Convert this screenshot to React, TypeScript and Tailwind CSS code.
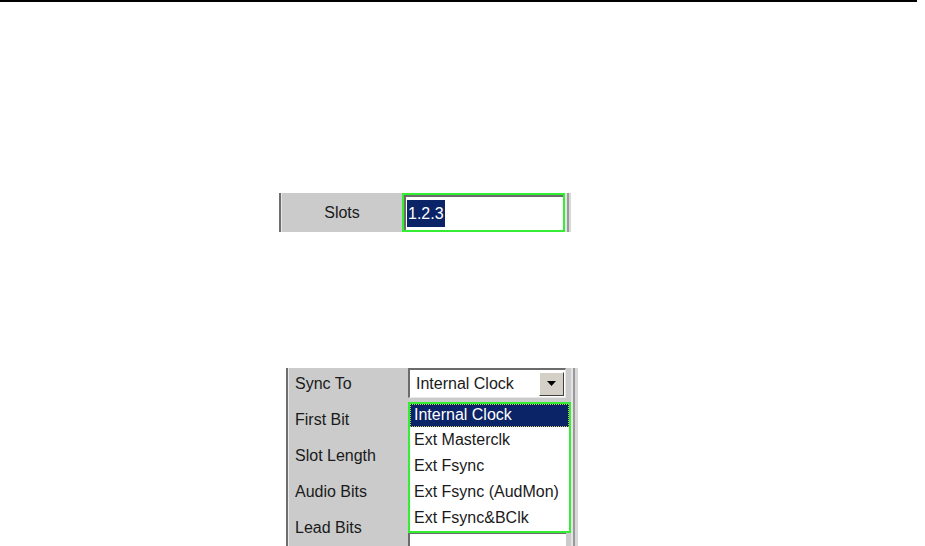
import React from 'react';

const font = { fontFamily: '"Liberation Sans", Arial, sans-serif' };

const labels = ['Sync To', 'First Bit', 'Slot Length', 'Audio Bits', 'Lead Bits'];
const options = ['Internal Clock', 'Ext Masterclk', 'Ext Fsync', 'Ext Fsync (AudMon)', 'Ext Fsync&BClk'];

const App: React.FC = () => {
  return (
    <div className="w-[925px] h-[546px] bg-white overflow-hidden relative" style={font}>
      {/* top rule */}
      <div className="w-[917px] h-[2px] bg-black" />

      {/* Slots field */}
      <div className="ml-[279px] mt-[191px] w-[292px] h-[39px] flex bg-[#cbcbcb]">
        <div className="w-[2px] bg-[#6e6e6e]" />
        <div className="w-[1px] bg-[#e8e8e8]" />
        <div className="w-[120px] flex items-center justify-center text-[16px] text-[#1a1a1a]">Slots</div>
        <div className="w-[163px] border-2 border-[#33ee33] bg-white">
          <div className="h-full border-t-2 border-l-2 border-[#6b6b6b] flex items-center pl-[1px]">
            <span className="bg-[#0b2468] text-white text-[16px] leading-[27px] px-[1px]">1.2.3</span>
          </div>
        </div>
        <div className="w-[2px] bg-[#e4e4e4]" />
        <div className="w-[2px] bg-[#9a9a9a]" />
        <div className="flex-1 bg-[#d8d8d8]" />
      </div>

      {/* Sync panel */}
      <div className="ml-[286px] mt-[136px] w-[292px] h-[178px] flex bg-[#cbcbcb] relative">
        <div className="w-[2px] bg-[#6e6e6e]" />
        <div className="w-[1px] bg-[#e8e8e8]" />
        <div className="w-[119px] flex flex-col pl-[6px] pt-[4px] gap-[13px] text-[16px] text-[#1a1a1a]">
          {labels.map((l) => (
            <div key={l} className="h-[23px] leading-[23px]">{l}</div>
          ))}
        </div>
        <div className="w-[158px] flex flex-col">
          <div className="h-[30px] bg-white border-t-2 border-l-2 border-[#6b6b6b] border-r border-b border-r-[#e8e8e8] border-b-[#e8e8e8] flex items-center">
            <span className="flex-1 pl-[6px] text-[16px] text-[#1a1a1a]">Internal Clock</span>
            <div className="w-[25px] h-[24px] mr-[1px] bg-[#d4d0c8] border border-t-white border-l-white border-r-[#404040] border-b-[#404040] flex items-center justify-center">
              <svg width="9" height="5" viewBox="0 0 9 5"><path d="M0 0h9L4.5 5z" fill="#000" /></svg>
            </div>
          </div>
          <div className="flex-1" />
          <div className="h-[14px] bg-white border-t-2 border-l-2 border-[#6b6b6b]" />
        </div>
        <div className="w-[5px] bg-[#cbcbcb]" />
        <div className="w-[2px] bg-[#e4e4e4]" />
        <div className="w-[2px] bg-[#9a9a9a]" />
        <div className="flex-1 bg-[#d8d8d8]" />

        {/* open dropdown list */}
        <div className="absolute left-[122px] top-[34px] w-[163px] h-[131px] bg-white border-2 border-[#33ee33] flex flex-col">
          {options.map((o, i) => (
            <div
              key={o}
              className={
                i === 0
                  ? 'h-[23px] leading-[20px] pl-[3px] bg-[#0b2468] text-white text-[16px] border border-dotted border-[#c8c860]'
                  : 'h-[26px] leading-[25px] pl-[4px] text-[#1a1a1a] text-[16px]'
              }
            >
              {o}
            </div>
          ))}
        </div>
      </div>
    </div>
  );
};

export default App;
